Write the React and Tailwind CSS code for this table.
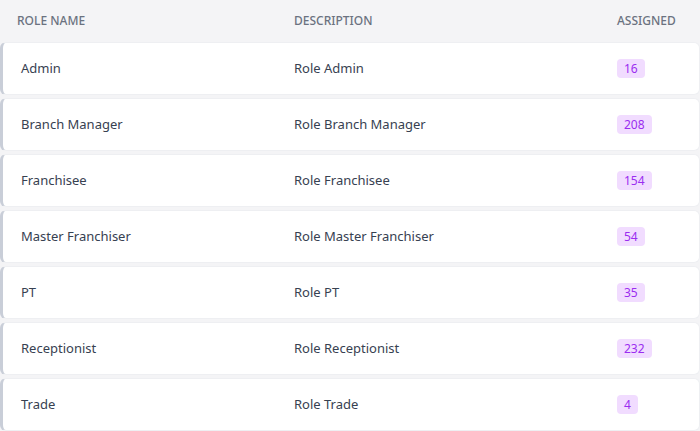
import React from 'react';

const ROLES = [
    { name: 'Admin', count: 16 },
    { name: 'Branch Manager', count: 208 },
    { name: 'Franchisee', count: 154 },
    { name: 'Master Franchiser', count: 54 },
    { name: 'PT', count: 35 },
    { name: 'Receptionist', count: 232 },
    { name: 'Trade', count: 4 },
];

export default function App() {
    return (
        <div className="w-[700px] h-[431px] overflow-hidden bg-[#f4f4f6] font-['Segoe_UI','Noto_Sans',sans-serif] text-[13px]">
            <div className="grid grid-cols-[277px_323px_1fr] h-[42px] items-center pl-[17px] text-[12px] font-medium uppercase text-[#6b7280]">
                <div>Role Name</div>
                <div>Description</div>
                <div>Assigned</div>
            </div>
            <div className="flex flex-col gap-[3px]">
                {ROLES.map(role => (
                    <div
                        key={role.name}
                        className="grid grid-cols-[273px_323px_1fr] items-center h-[53px] pl-[18px] bg-white border border-[#eeeff2] border-l-[3px] border-l-[#c9ced8] rounded-md text-[#374151]"
                    >
                        <div>{role.name}</div>
                        <div>Role {role.name}</div>
                        <div>
                            <span className="inline-block px-[7px] py-[1px] rounded bg-[#f1dcff] text-[#9b2df0] text-[12px] leading-[17px]">
                                {role.count}
                            </span>
                        </div>
                    </div>
                ))}
            </div>
        </div>
    );
}
